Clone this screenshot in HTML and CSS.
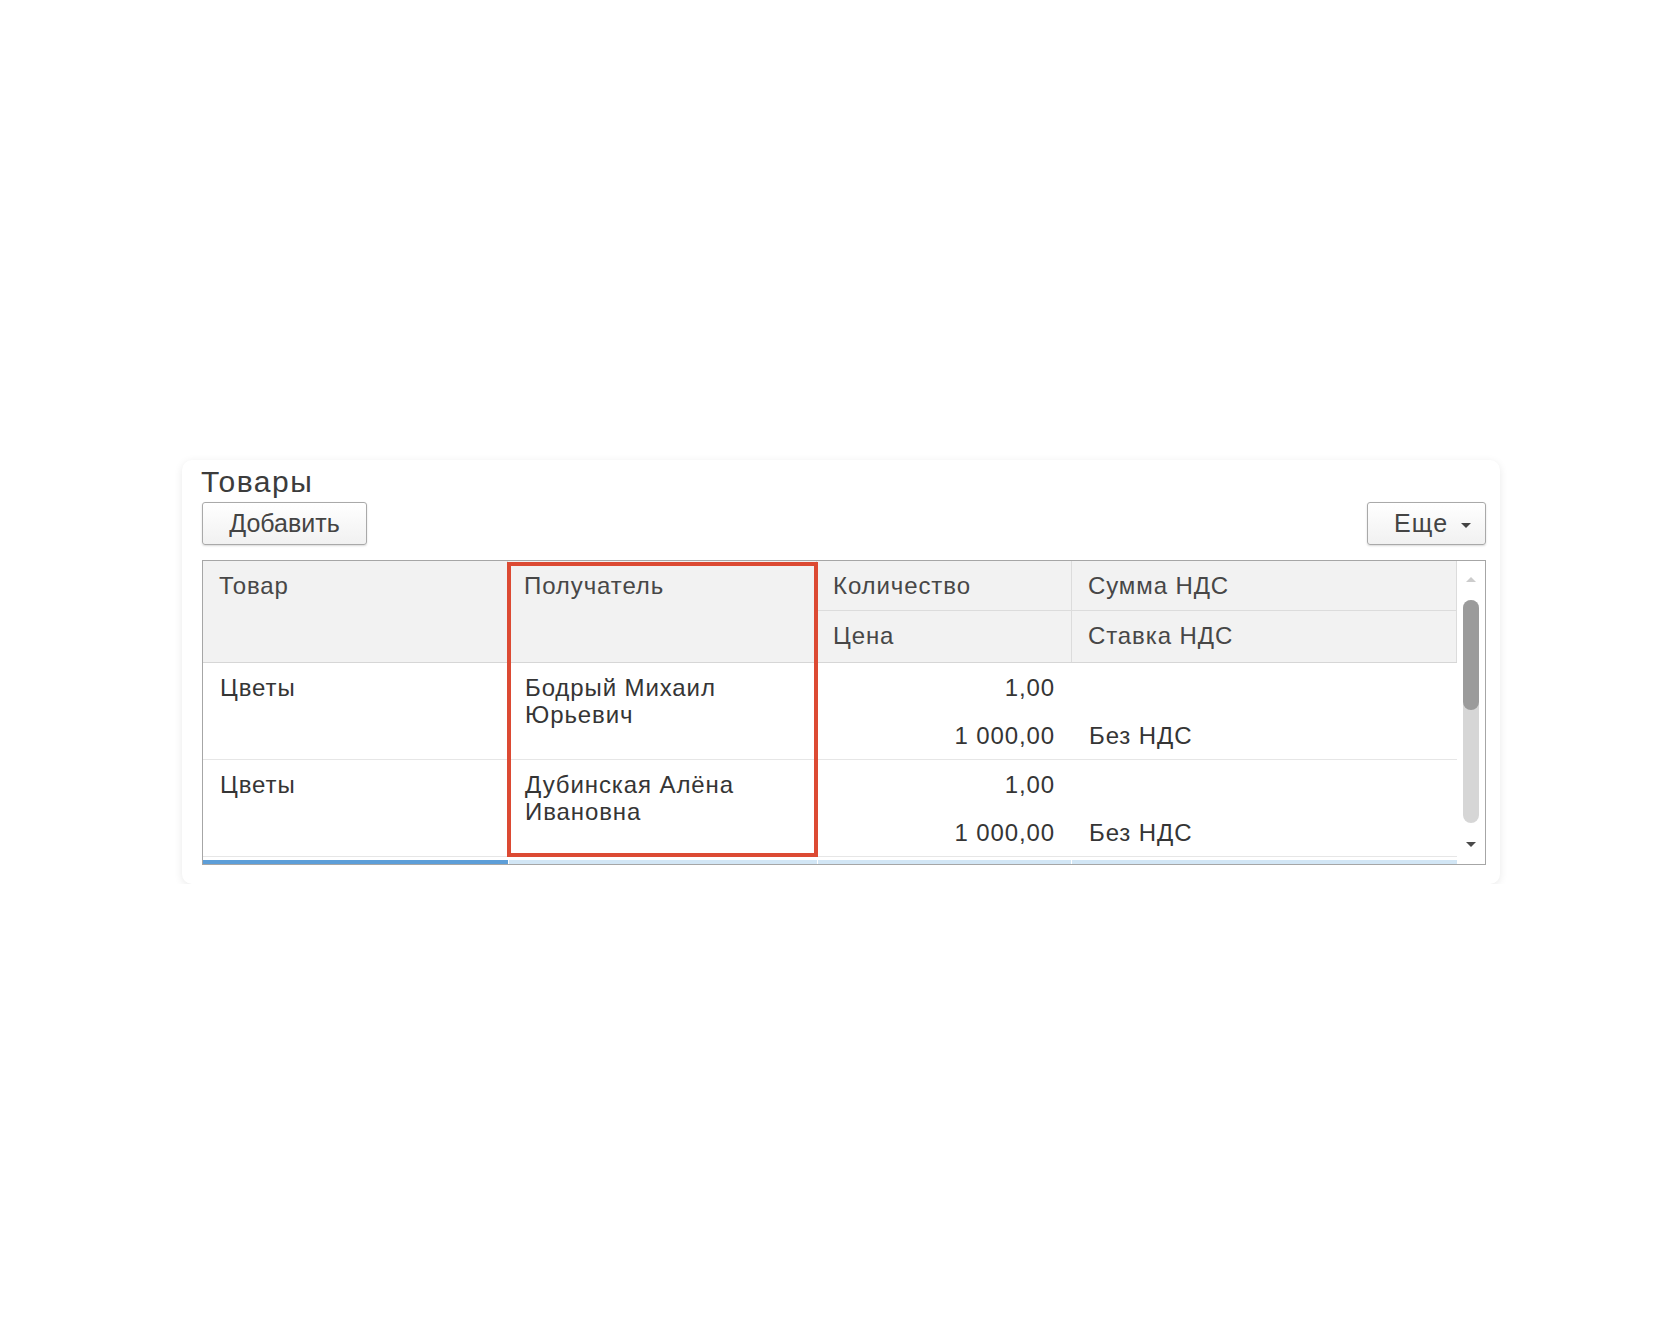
FILE: index.html
```html
<!DOCTYPE html>
<html lang="ru">
<head>
  <meta charset="UTF-8">
  <meta name="viewport" content="width=device-width, initial-scale=1.0">
  <title>Товары</title>
  <link rel="stylesheet" href="styles.css">
</head>
<body>
  <div class="panel">
    <div class="title">Товары</div>
    <div class="toolbar">
      <button class="btn btn-add">Добавить</button>
      <button class="btn btn-more">Еще<span class="caret"></span></button>
    </div>

    <div class="table">
      <div class="table-main">
        <div class="head">
          <div class="hcell span2">Товар</div>
          <div class="hcell span2">Получатель</div>
          <div class="hcell top">Количество</div>
          <div class="hcell top">Сумма НДС</div>
          <div class="hcell">Цена</div>
          <div class="hcell">Ставка НДС</div>
        </div>

        <div class="row">
          <div class="cell span2">Цветы</div>
          <div class="cell span2">Бодрый Михаил Юрьевич</div>
          <div class="cell num">1,00</div>
          <div class="cell"></div>
          <div class="cell num">1 000,00</div>
          <div class="cell">Без НДС</div>
        </div>

        <div class="row">
          <div class="cell span2">Цветы</div>
          <div class="cell span2">Дубинская Алёна Ивановна</div>
          <div class="cell num">1,00</div>
          <div class="cell"></div>
          <div class="cell num">1 000,00</div>
          <div class="cell">Без НДС</div>
        </div>

        <div class="current-line">
          <span class="on"></span>
          <span></span>
          <span></span>
          <span></span>
        </div>
      </div>

      <div class="scrollbar">
        <span class="arrow up"></span>
        <div class="track"><div class="thumb"></div></div>
        <span class="arrow down"></span>
      </div>

      <!-- annotation frame over the "Получатель" column -->
      <div class="highlight"></div>
    </div>
  </div>
</body>
</html>
```

FILE: styles.css
```css
body {
  margin: 0;
  background: #fff;
  font-family: 'Liberation Sans', Arial, sans-serif;
  color: #363636;
}

.panel {
  width: 1318px;
  box-sizing: border-box;
  margin: 460px 0 0 182px;
  padding: 5px 14px 19px 20px;
  background: #fff;
  border-radius: 10px;
  box-shadow: 0 2px 9px rgba(0, 0, 0, 0.09);
}

.title {
  font-size: 30px;
  line-height: 34px;
  letter-spacing: 1.5px;
  color: #3c3c3c;
  margin-left: -1px;
}

.toolbar {
  display: flex;
  justify-content: space-between;
  margin-top: 3px;
}

.btn {
  height: 43px;
  box-sizing: border-box;
  border: 1px solid #a9a9a9;
  border-radius: 3px;
  background: linear-gradient(#ffffff, #f1f1f1);
  box-shadow: 0 1px 2px rgba(0, 0, 0, 0.15);
  font-family: 'Liberation Sans', Arial, sans-serif;
  font-size: 25px;
  color: #444;
  padding: 0;
  display: flex;
  align-items: center;
  justify-content: center;
}

.btn-add {
  width: 165px;
}

.btn-more {
  width: 119px;
  justify-content: flex-start;
  padding-left: 26px;
  letter-spacing: 1.2px;
}

.caret {
  width: 0;
  height: 0;
  border-left: 5px solid transparent;
  border-right: 5px solid transparent;
  border-top: 5px solid #444;
  margin-left: 13px;
  margin-top: 3px;
}

.table {
  position: relative;
  display: flex;
  margin-top: 15px;
  border: 1px solid #a6a6a6;
  background: #fff;
}

.table-main {
  width: 1254px;
}

.head,
.row {
  display: grid;
  grid-template-columns: 305px 309px 255px 385px;
  font-size: 24px;
  line-height: 27px;
  letter-spacing: 0.9px;
}

.head {
  grid-template-rows: 50px 51px;
  background: #f2f2f2;
  color: #474747;
  border-bottom: 1px solid #d6d6d6;
}

.hcell {
  padding: 11px 16px 0 16px;
  border-right: 1px solid #dcdcdc;
  box-sizing: border-box;
}

.hcell.top {
  border-bottom: 1px solid #dcdcdc;
}

.span2 {
  grid-row: span 2;
}

.row {
  grid-template-rows: 48px 48px;
  border-bottom: 1px solid #e6e6e6;
  color: #353535;
}

.cell {
  padding: 11px 16px 0 17px;
}

.cell.num {
  text-align: right;
  padding-right: 17px;
}

.current-line {
  display: flex;
  height: 4px;
  margin-top: 3px;
}

.current-line span {
  width: 385px;
  background: #d2e6f5;
  margin-left: 1px;
}

.current-line span:nth-child(2) { width: 308px; }
.current-line span:nth-child(3) { width: 254px; }

.current-line .on {
  width: 305px;
  margin-left: 0;
  background: #5d9ed8;
}

.scrollbar {
  width: 28px;
  display: flex;
  flex-direction: column;
  align-items: center;
  padding-top: 16px;
}

.arrow {
  width: 0;
  height: 0;
  border-left: 5px solid transparent;
  border-right: 5px solid transparent;
}

.arrow.up {
  border-bottom: 5px solid #cccccc;
}

.arrow.down {
  border-top: 5px solid #4a4a4a;
  margin-top: 19px;
}

.track {
  width: 16px;
  height: 223px;
  margin-top: 18px;
  border-radius: 8px;
  background: #d6d6d6;
}

.thumb {
  height: 110px;
  border-radius: 8px;
  background: #9b9b9b;
}

.highlight {
  position: absolute;
  left: 304px;
  top: 1px;
  width: 311px;
  height: 295px;
  box-sizing: border-box;
  border: 4px solid #dc4a33;
}
```
